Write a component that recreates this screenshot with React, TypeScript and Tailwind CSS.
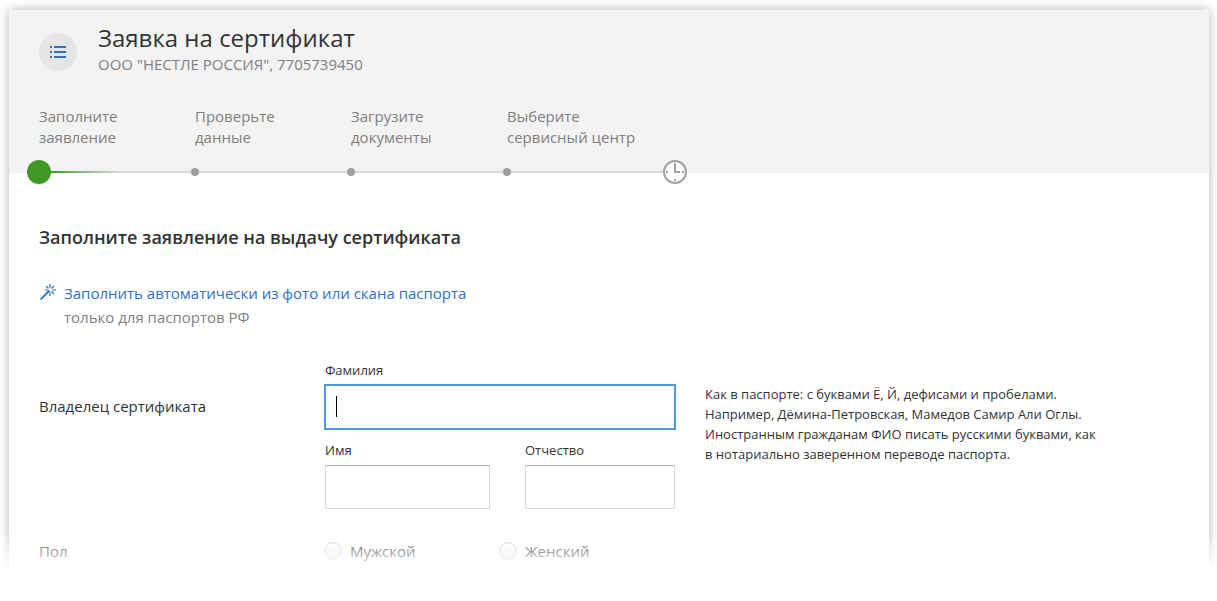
import type { ReactNode } from "react";

const steps = [
  ["Заполните", "заявление"],
  ["Проверьте", "данные"],
  ["Загрузите", "документы"],
  ["Выберите", "сервисный центр"],
];

function MenuIcon() {
  return (
    <svg width="16" height="12" viewBox="0 0 16 12" fill="#2f72c4" shapeRendering="crispEdges" aria-hidden="true">
      <path d="M0 0h2v2H0zM4 0h12v2H4zM0 5h2v2H0zM4 5h12v2H4zM0 10h2v2H0zM4 10h12v2H4z" />
    </svg>
  );
}

function ClockIcon() {
  return (
    <svg width="24" height="24" viewBox="0 0 24 24" aria-hidden="true">
      <circle cx="12" cy="12" r="11" fill="#fff" stroke="#a0a0a0" strokeWidth="2" />
      <path d="M11 3h2v8h4v2h-6zM3 11h2v2H3zM19 11h2v2h-2zM11 19h2v2h-2z" fill="#a0a0a0" />
    </svg>
  );
}

function WandIcon() {
  return (
    <svg width="16" height="16" viewBox="0 0 16 16" fill="none" stroke="#2f72c4" aria-hidden="true">
      <path d="M0.5 15.5L9.5 6.5" strokeWidth="1.8" />
      <path
        d="M10 0v4M10 8v4M5 6h3M12 6h4M6 2l2.5 2.5M14 2l-2.5 2.5M14 10l-2.5-2.5"
        strokeWidth="1.2"
      />
    </svg>
  );
}

function Stepper() {
  return (
    <div>
      <ol className="flex text-[15px] leading-[21px] text-[#808080]">
        {steps.map(([first, second]) => (
          <li key={first} className="w-[156px] shrink-0">
            {first}
            <br />
            {second}
          </li>
        ))}
      </ol>
      <div className="-mb-[11px] -ml-3 mt-3 flex h-6 items-center">
        <span className="size-6 rounded-full bg-[#3f9726]" />
        <span className="h-0.5 w-[140px] bg-linear-to-r from-[#3f9726] to-[#d9d9d9] to-50%" />
        <span className="size-2 rounded-full bg-[#a0a0a0]" />
        <span className="h-0.5 w-[148px] bg-[#d9d9d9]" />
        <span className="size-2 rounded-full bg-[#a0a0a0]" />
        <span className="h-0.5 w-[148px] bg-[#d9d9d9]" />
        <span className="size-2 rounded-full bg-[#a0a0a0]" />
        <span className="h-0.5 w-[152px] bg-[#d9d9d9]" />
        <ClockIcon />
      </div>
    </div>
  );
}

interface FieldProps {
  id: string;
  label: string;
  className?: string;
}

function Field({ id, label, className = "" }: FieldProps) {
  return (
    <div className={className}>
      <label htmlFor={id} className="block text-[13px] leading-5">
        {label}
      </label>
      <input
        id={id}
        type="text"
        className="mt-[5px] block h-11 w-full border border-[#d9d9d9] border-t-[#b3b3b3] bg-white px-3 text-[15px] outline-none"
      />
    </div>
  );
}

function Radio({ value, children }: { value: string; children: ReactNode }) {
  return (
    <label className="-ml-px flex w-44 items-center gap-2">
      <input
        type="radio"
        name="gender"
        value={value}
        className="size-[18px] appearance-none rounded-full border border-[#cccccc] bg-linear-to-b from-white to-[#e8e8e8]"
      />
      {children}
    </label>
  );
}

export default function App() {
  return (
    <div className="relative overflow-hidden bg-white pb-7 pl-[9px] pr-2 pt-[10px] font-['Open_Sans','Noto_Sans',sans-serif] text-[15px] text-[#333]">
      <main className="pb-[10px] shadow-[0_0_10px_rgba(0,0,0,0.3)]">
        <header className="flow-root bg-[#f3f3f3] pl-[30px] pt-3">
          <div className="flex items-center gap-[21px]">
            <button
              type="button"
              aria-label="Меню"
              className="mt-2 flex size-[38px] items-center justify-center rounded-full bg-[#e5e5e5]"
            >
              <MenuIcon />
            </button>
            <div>
              <h1 className="text-[24px] leading-8">Заявка на сертификат</h1>
              <p className="leading-5 text-[#808080]">ООО "НЕСТЛЕ РОССИЯ", 7705739450</p>
            </div>
          </div>
          <div className="flow-root pt-8">
            <Stepper />
          </div>
        </header>

        <form className="px-[30px] pt-[50px]">
          <h2 className="text-[18px] font-semibold leading-7">Заполните заявление на выдачу сертификата</h2>

          <div className="mt-[30px] flex gap-2 leading-6">
            <div className="pl-px pt-[3px]">
              <WandIcon />
            </div>
            <div>
              <a href="#passport" className="text-[#2f72c4]">
                Заполнить автоматически из фото или скана паспорта
              </a>
              <p className="text-[#808080]">только для паспортов РФ</p>
            </div>
          </div>

          <div className="mt-[31px] flex">
            <div className="w-[286px] shrink-0 pt-[34px] leading-6">Владелец сертификата</div>
            <div className="w-[350px] shrink-0">
              <label htmlFor="surname" className="block text-[13px] leading-5">
                Фамилия
              </label>
              <div className="relative mt-[5px]">
                <input
                  id="surname"
                  type="text"
                  className="block h-11 w-full border border-[#5199db] px-3 text-[15px] caret-transparent outline-1 outline-[#5199db]"
                />
                <span className="absolute left-[11px] top-[11px] h-[21px] w-px bg-black" />
              </div>
              <div className="mt-[11px] flex justify-between">
                <Field id="name" label="Имя" className="w-[165px]" />
                <Field id="patronymic" label="Отчество" className="w-[150px]" />
              </div>
            </div>
            <p className="ml-[30px] pt-6 text-[13px] leading-5">
              Как в паспорте: с буквами Ё, Й, дефисами и пробелами.
              <br />
              Например, Дёмина-Петровская, Мамедов Самир Али Оглы.
              <br />
              Иностранным гражданам ФИО писать русскими буквами, как
              <br />
              в нотариально заверенном переводе паспорта.
            </p>
          </div>

          <fieldset className="mt-[30px] flex leading-6" aria-label="Пол">
            <div className="w-[286px] shrink-0">Пол</div>
            <Radio value="male">Мужской</Radio>
            <Radio value="female">Женский</Radio>
          </fieldset>
        </form>
      </main>
      {/* bottom fade */}
      <div className="pointer-events-none absolute inset-x-0 bottom-0 h-[72px] bg-linear-to-b from-white/0 to-white to-60%" />
    </div>
  );
}
